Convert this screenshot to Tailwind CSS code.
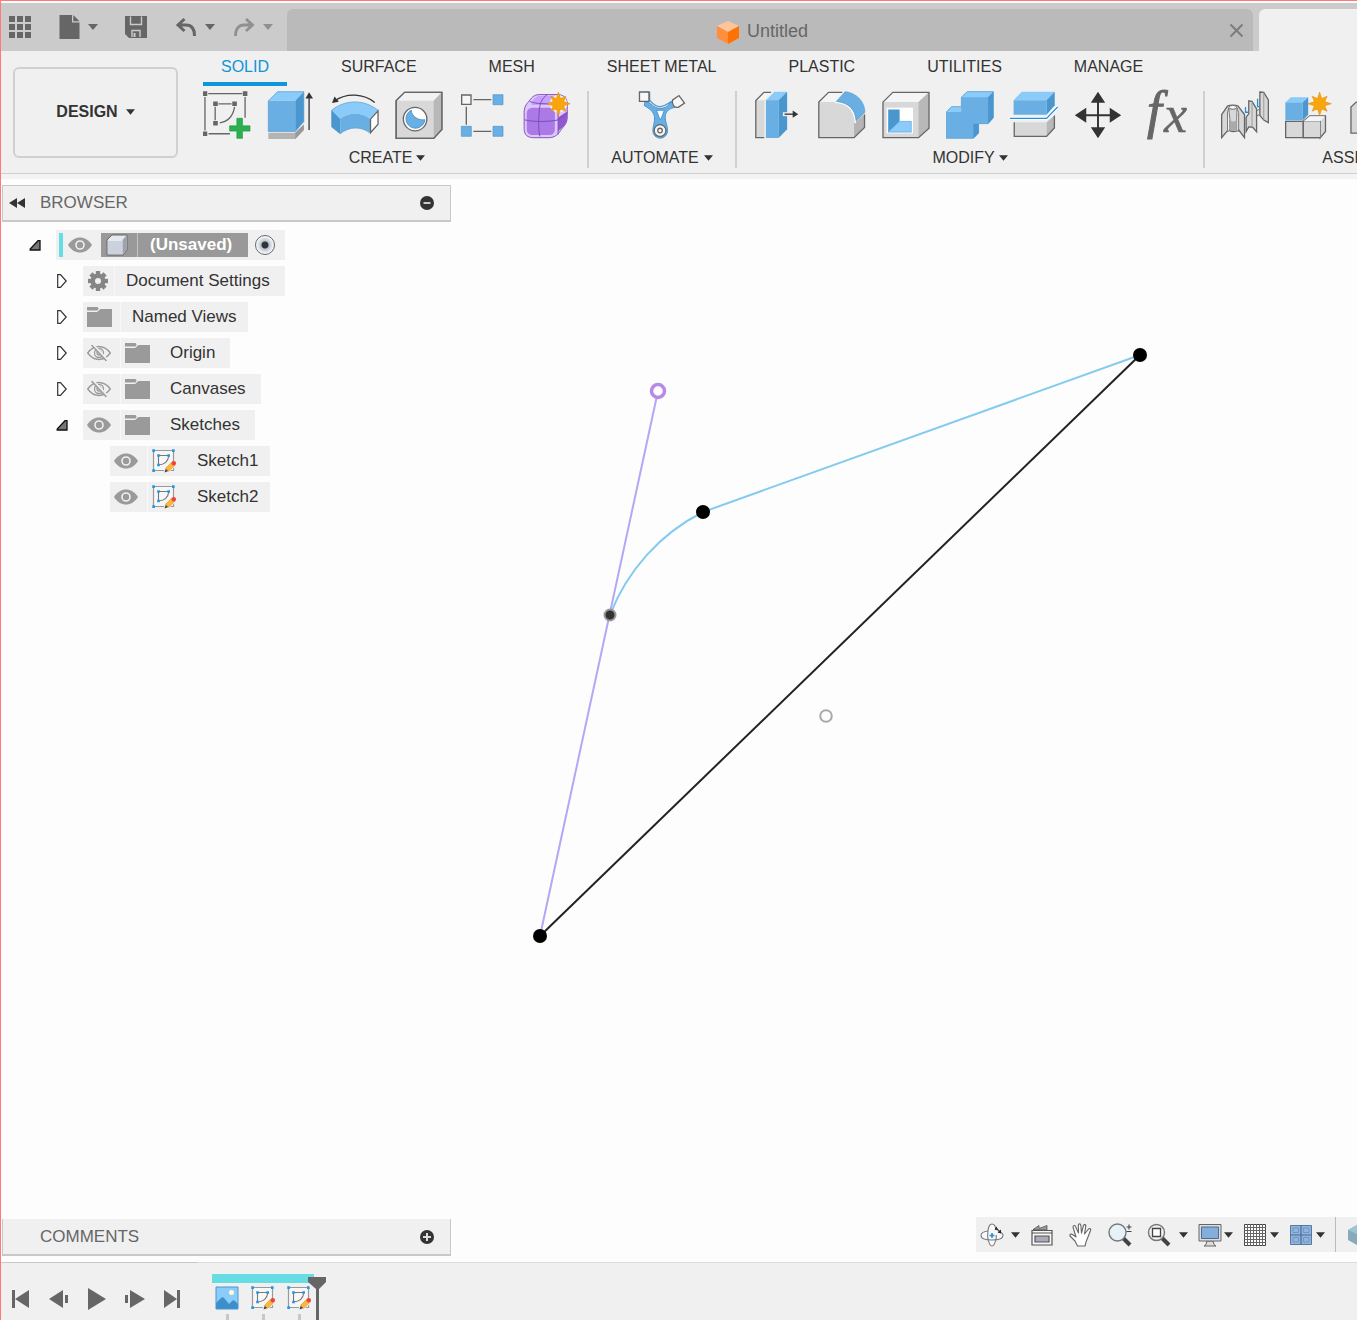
<!DOCTYPE html>
<html lang="en">
<head>
  <meta charset="UTF-8">
  <meta name="viewport" content="width=device-width, initial-scale=1.0">
  <title>Untitled</title>
  <script src="https://cdn.jsdelivr.net/npm/@tailwindcss/browser@4"></script>
</head>
<body class="bg-[#fdfdfd] font-['Liberation_Sans',Arial,sans-serif] text-[#333]">

  <!-- Shared icons -->
  <svg class="hidden" aria-hidden="true">
    <symbol id="caret" viewBox="0 0 10 6"><path d="M0 0h10L5 6z" fill="currentColor"/></symbol>
    <symbol id="eye" viewBox="0 0 24 16">
      <path d="M0 8C3 3 7.500 .5 12 .5S21 3 24 8c-3 5-7.500 7.500-12 7.500S3 13 0 8z" fill="#9a9a9a"/>
      <circle cx="12" cy="8" r="4" fill="#9a9a9a" stroke="#f0f0f0" stroke-width="1.600"/>
    </symbol>
    <symbol id="eye-off" viewBox="0 0 24 16">
      <g fill="none" stroke="#9a9a9a" stroke-width="1.300">
        <path d="M.7 8C4 3.500 8 1.500 12 1.500S20 3.500 23.300 8C20 12.500 16 14.500 12 14.500S4 12.500 .7 8z"/>
        <circle cx="12" cy="8" r="4.500"/><circle cx="12" cy="8" r="2"/>
      </g>
      <path d="M6 -.5L20.500 15" stroke="#f0f0f0" stroke-width="2"/>
      <path d="M4.500 0L19.500 16" stroke="#9a9a9a" stroke-width="1.500"/>
    </symbol>
    <symbol id="folder" viewBox="0 0 25 20">
      <path d="M0 5h10l3.500-3H25v18H0z" fill="#9a9a9a"/>
      <path d="M0 0h10.500l1.200 1.500L10.500 3.500H0z" fill="#9a9a9a"/>
    </symbol>
    <symbol id="closed" viewBox="0 0 10 14"><path d="M.7 .7h2.800L9.200 7l-5.700 6.300H.7z" fill="#fff" stroke="#333" stroke-width="1.200"/></symbol>
    <symbol id="open" viewBox="0 0 12 12"><path d="M1.200 11v-1L9 1.700h2V11z" fill="#777" stroke="#111" stroke-width="1.300"/></symbol>
    <symbol id="sketch" viewBox="0 0 24 24">
      <path d="M1.500 1.500h20v20h-20z" fill="#f7f7f7" stroke="#999" stroke-width="1.200"/>
      <path d="M6.500 6.500h10.300c-.5 5.500-4.500 9-10.300 9.500z" fill="none" stroke="#777" stroke-width="1.100"/>
      <path d="M.3 .3h2.600v2.600H.3zM20 .3h2.600v2.600H20zM.3 20.300h2.600v2.600H.3zM5.200 5.200h2.600v2.600H5.200zM15.400 5.200H18v2.600h-2.600zM5.200 14.700h2.600v2.600H5.200z" fill="#2196e3"/>
      <path d="M11 24.500l1.800-5.300L20 12l5 4-8 7z" fill="#f0f0f0"/>
      <path d="M12.500 23.500l1.300-4 2.700 2.500z" fill="#444"/>
      <path d="M13.600 19.300l6.200-6.200 3.300 3-6.400 6.200z" fill="#fbb63c" stroke="#e59a1c" stroke-width=".6"/>
      <circle cx="21.800" cy="14.200" r="2.200" fill="#f04040"/>
    </symbol>
    <symbol id="star" viewBox="-38 -38 76 76">
      <path d="M0-36L6.500-16 23-23 16-6.500 36 0 16 6.500 23 23 6.500 16 0 36-6.500 16-23 23-16 6.500-36 0-16-6.500-23-23-6.500-16z" fill="#faa50c" stroke="#dd8a00" stroke-width="1.500"/>
    </symbol>
  </svg>

  <div class="flex h-screen flex-col overflow-hidden border-t border-l border-[#ff7a7a]">

    <!-- Title bar -->
    <header class="mt-[2px] flex h-12 shrink-0 items-center bg-[#cbcbcb] pl-[7px] text-[#666]">
      <div class="flex items-center gap-[26px]">
        <button aria-label="Data panel">
          <svg class="size-6" viewBox="0 0 24 24" fill="currentColor"><path d="M1 1h6v6H1zM9 1h6v6H9zM17 1h6v6h-6zM1 9h6v6H1zM9 9h6v6H9zM17 9h6v6h-6zM1 17h6v6H1zM9 17h6v6H9zM17 17h6v6h-6z"/></svg>
        </button>
        <button class="flex items-center gap-[6px]" aria-label="File">
          <svg class="size-6" viewBox="0 0 24 24" fill="currentColor"><path d="M1.500 0H14v7.500h7.500V24h-20z"/><path d="M15.300 0l6.200 6.300h-6.200z"/></svg>
          <svg class="h-[6px] w-[10px]"><use href="#caret"/></svg>
        </button>
        <button aria-label="Save">
          <svg class="size-6" viewBox="0 0 24 24"><path d="M1 1h22v22H5l-4-4z" fill="currentColor"/><path d="M6.500 1.500v8h11v-8M8 22v-6.500h8V22" fill="none" stroke="#cbcbcb" stroke-width="1.400"/><path d="M10.500 18v4" stroke="#cbcbcb" stroke-width="2"/></svg>
        </button>
        <div class="flex items-center gap-[17px]">
          <button class="flex items-center gap-[7px]" aria-label="Undo">
            <svg class="size-6" viewBox="0 0 24 24" fill="none" stroke="currentColor" stroke-width="3"><path d="M10.500 4L4 10l6.500 6M4 10h8c5.500 0 8.500 4 8.500 11"/></svg>
            <svg class="h-[6px] w-[10px]"><use href="#caret"/></svg>
          </button>
          <button class="flex items-center gap-[7px] text-[#909090]" aria-label="Redo">
            <svg class="size-6" viewBox="0 0 24 24" fill="none" stroke="currentColor" stroke-width="2.800"><path d="M14 4l6.500 6-6.500 6M20.500 10H12c-5.500 0-8.500 4-8.500 11"/></svg>
            <svg class="h-[6px] w-[10px]"><use href="#caret"/></svg>
          </button>
        </div>
      </div>
      <div class="ml-[14px] flex h-[42px] flex-1 items-center self-end rounded-t-md bg-[#bababa] pr-[9px] pl-2">
        <div class="flex flex-1 items-center justify-center gap-[7px] pt-[3px] text-[18px]">
          <svg class="size-6" viewBox="0 0 24 24"><path d="M12 1l11 5-11 6L1 6z" fill="#ffc59a"/><path d="M1 6l11 6v12L1 18z" fill="#ff8f3c"/><path d="M23 6l-11 6v12l11-6z" fill="#ff7100"/></svg>
          <span>Untitled</span>
        </div>
        <button aria-label="Close">
          <svg class="size-[15px]" viewBox="0 0 15 15" stroke="#7c7c7c" stroke-width="2"><path d="M1.500 1.500l12 12M13.500 1.500l-12 12"/></svg>
        </button>
      </div>
      <div class="ml-[6px] h-[42px] w-[98px] self-end rounded-tl-md bg-[#f0f0f0]"></div>
    </header>

    <!-- Ribbon -->
    <section class="flex shrink-0 border-b border-[#d0d0d0] bg-[#f0f0f0] pb-[5px]">
      <button class="mt-4 ml-3 flex h-[91px] w-[165px] shrink-0 items-center justify-center gap-2 rounded-md border-2 border-[#d0d0d0] pb-[2px] text-[16px] font-bold">
        DESIGN
        <svg class="h-[6px] w-[9px]"><use href="#caret"/></svg>
      </button>
      <div class="ml-[25px] flex flex-col gap-[5px]">
        <nav class="flex gap-9 text-[16px]">
          <a href="#" class="flex h-[35px] items-center border-b-4 border-[#0d96d9] px-[18px] text-[#0d96d9]">SOLID</a>
          <a href="#" class="flex h-[35px] items-center border-b-4 border-transparent px-[18px]">SURFACE</a>
          <a href="#" class="flex h-[35px] items-center border-b-4 border-transparent px-[18px]">MESH</a>
          <a href="#" class="flex h-[35px] items-center border-b-4 border-transparent px-[18px] whitespace-nowrap">SHEET METAL</a>
          <a href="#" class="flex h-[35px] items-center border-b-4 border-transparent px-[18px]">PLASTIC</a>
          <a href="#" class="flex h-[35px] items-center border-b-4 border-transparent px-[18px]">UTILITIES</a>
          <a href="#" class="flex h-[35px] items-center border-b-4 border-transparent px-[18px]">MANAGE</a>
        </nav>

        <div class="flex">
          <!-- Create -->
          <div class="flex flex-col items-center gap-[9px] border-r-2 border-[#d0d0d0] pr-4">
            <div class="flex gap-4">
              <button aria-label="Create Sketch">
                <svg class="size-12" viewBox="35 123 146 146" fill="none" stroke="#666" stroke-width="4">
                  <path d="M51 131h103M41 141v102M163 141v63M52 253h65"/>
                  <path d="M82 162h40M72 171v41M131 171c-4 26-18 44-45 49"/>
                  <path d="M34 124h14v14H34zM156 124h14v14h-14zM34 246h14v14H34zM66 155h14v14H66zM124 155h14v14h-14zM66 214h14v14H66z" fill="#666" stroke="none"/>
                  <path d="M138 206h17v23h23v16h-23v22h-17v-22h-22v-16h22z" fill="#2bb04f" stroke="#1d9a44" stroke-width="2"/>
                </svg>
              </button>
              <button aria-label="Extrude">
                <svg class="size-12" viewBox="228 123 146 146">
                  <path d="M232 250h82l26-25v17l-26 27h-82z" fill="#b4b4b4"/><path d="M314 250l26-25v17l-26 27z" fill="#999"/>
                  <path d="M232 153l28-28h80l-26 28z" fill="#8acbfa"/><path d="M232 153h82v93h-82z" fill="#6aafe3"/><path d="M314 153l26-28v91l-26 30z" fill="#4a96cf"/>
                  <path d="M232 153l28-28h80v91l-26 30h-82z" fill="none" stroke="#4a96cf" stroke-width="2"/>
                  <path d="M356 242V140" stroke="#333" stroke-width="4"/><path d="M345 146l11-19 12 19z" fill="#333"/>
                </svg>
              </button>
              <button aria-label="Revolve">
                <svg class="size-12" viewBox="420 123 147 147">
                  <path d="M422 182c42-34 100-34 142 0l-24 26c-28-20-64-20-92 0z" fill="#8acbfa"/>
                  <path d="M422 182l26 26v46l-26-21z" fill="#4a96cf"/>
                  <path d="M448 208c28-20 64-20 92 0v43c-28-20-64-20-92 3z" fill="#6aafe3"/>
                  <path d="M422 182c42-34 100-34 142 0M422 182v51l26 21c28-23 64-23 90-3" fill="none" stroke="#4a96cf" stroke-width="2"/>
                  <path d="M541 209l23-25v41l-23 26z" fill="#fff" stroke="#666" stroke-width="4"/>
                  <path d="M554 158c-34-28-86-30-121-6" fill="none" stroke="#333" stroke-width="4"/><path d="M423 160l8-20 13 16z" fill="#333"/>
                </svg>
              </button>
              <button aria-label="Hole">
                <svg class="size-12" viewBox="615 123 144 147" stroke="#666" stroke-width="4">
                  <path d="M617 153l26-26h114v114l-25 27H617z" fill="#d8d8d8"/>
                  <path d="M617 153l26-26h114l-25 26z" fill="#f2f2f2" stroke="none"/><path d="M732 153l25-26v114l-25 27z" fill="#b8b8b8" stroke="none"/>
                  <path d="M617 153l26-26h114v114l-25 27H617z" fill="none"/>
                  <circle cx="675" cy="209" r="36" fill="#fff"/>
                  <path d="M663 182c2 20 22 32 42 29a29 29 0 1 1-42-29z" fill="#6aafe3" stroke="#4a96cf" stroke-width="3"/>
                </svg>
              </button>
              <button aria-label="Rectangular Pattern">
                <svg class="size-12" viewBox="52 123 144 144">
                  <path d="M95 149h54M74 170v54M95 244h54" stroke="#666" stroke-width="4"/>
                  <path d="M60 135h28v28H60z" fill="#f7f7f7" stroke="#666" stroke-width="4"/>
                  <path d="M154 134h30v30h-30zM59 229h30v30H59zM154 229h30v30h-30z" fill="#6aafe3" stroke="#4a96cf" stroke-width="2"/>
                </svg>
              </button>
              <button aria-label="Create Form">
                <svg class="size-12" viewBox="250 123 146 147" fill="none">
                  <path d="M253 190c0-18 6-26 14-35 8-10 15-21 32-21h55c20 0 31 10 31 30v37c0 14-3 22-12 32-12 14-18 33-44 33h-46c-20 0-30-8-30-28z" fill="#dcc6fa" stroke="#8452c0" stroke-width="3"/>
                  <path d="M276 158c8-13 14-20 26-20h50l-24 28h-52z" fill="#c79ffc"/>
                  <rect x="261" y="174" width="86" height="84" rx="17" fill="#ab7ae6"/>
                  <path d="M357 204l28-18v16c0 14-4 20-12 30l-16 14z" fill="#9059d0"/>
                  <path d="M254 211c20 7 80 7 104 0l27-22M301 262c-5-24-4-66 0-92 3-18 14-32 24-36M357 256v-70M270 155c20 8 50 8 84 6" stroke="#7b4bb8" stroke-width="3"/>
                  <circle cx="358" cy="162" r="27" fill="#f0f0f0"/>
                  <use href="#star" x="320" y="124" width="76" height="76"/>
                </svg>
              </button>
            </div>
            <button class="flex items-center gap-1 text-[16px] leading-5">CREATE <svg class="h-[6px] w-[9px]"><use href="#caret"/></svg></button>
          </div>

          <!-- Automate -->
          <div class="flex w-[148px] shrink-0 flex-col items-center gap-[9px] border-r-2 border-[#d0d0d0]">
            <button aria-label="Automated Modeling">
              <svg class="size-12" viewBox="593 123 144 147" stroke="#666" stroke-width="4">
                <path d="M612 158c22-4 24 18 45 18s28-6 35-22l18 18c-25 4-35 14-35 32 0 15 7 25 7 41a22 22 0 1 1-45 0c0-16 7-28 5-43-3-16-14-25-31-34z" fill="#6aafe3" stroke="#4a96cf" stroke-width="3"/>
                <path d="M612 127h15v24c12 14 20 20 32 20 20 0 23-12 35-15" fill="none" stroke="#4a96cf"/>
                <path d="M648 182h24l-10 27h-4z" fill="#fff" stroke="#4a96cf" stroke-width="3"/>
                <path d="M596 126h29v29h-29z" fill="#f7f7f7"/><path d="M697 151l20-14 17 23-19 13c-13 2-20-9-18-22z" fill="#f7f7f7"/>
                <circle cx="659" cy="244" r="18" fill="#f7f7f7"/><circle cx="659" cy="244" r="7" fill="#f7f7f7"/>
              </svg>
            </button>
            <button class="flex items-center gap-[5px] text-[16px] leading-5">AUTOMATE <svg class="h-[6px] w-[9px]"><use href="#caret"/></svg></button>
          </div>

          <!-- Modify -->
          <div class="flex flex-col items-center gap-[9px] border-r-2 border-[#d0d0d0] px-[17px]">
            <div class="flex gap-4">
              <button aria-label="Press Pull">
                <svg class="size-12" viewBox="42 123 146 147">
                  <path d="M47 151l23-24h34l-30 30v109H47z" fill="#d8d8d8"/><path d="M47 151l23-24h34l-30 24z" fill="#f5f5f5"/>
                  <path d="M94 127H72l-25 25v114h26" fill="none" stroke="#666" stroke-width="4"/>
                  <path d="M74 150l26-30v150H74z" fill="#f0f0f0"/>
                  <path d="M78 151l26-26h39l-26 26z" fill="#8acbfa"/><path d="M78 151h39v116H78z" fill="#6aafe3"/><path d="M117 151l26-26v115l-26 27z" fill="#4a96cf"/>
                  <path d="M130 194h48" stroke="#f0f0f0" stroke-width="12"/><path d="M135 194h32" stroke="#333" stroke-width="4"/><path d="M160 183l17 11-17 11z" fill="#333"/>
                </svg>
              </button>
              <button aria-label="Fillet">
                <svg class="size-12" viewBox="234 123 146 147">
                  <path d="M236 157l30-30h46l-24 30c32 0 58 26 58 58l30-20v40l-32 31H236z" fill="#d8d8d8"/>
                  <path d="M236 157l30-30h46l-26 30z" fill="#f5f5f5"/><path d="M344 222l32-28v41l-32 31z" fill="#b4b4b4"/>
                  <path d="M308 127h-42l-30 30v109h108l32-31v-40" fill="none" stroke="#666" stroke-width="4"/>
                  <path d="M286 158c42 2 60 25 62 64" fill="none" stroke="#fff" stroke-width="4"/>
                  <path d="M290 155l27-30c34 4 60 30 60 64l-27 25c-2-34-22-55-60-59z" fill="#6aafe3" stroke="#4a96cf" stroke-width="2"/>
                </svg>
              </button>
              <button aria-label="Shell">
                <svg class="size-12" viewBox="427 123 147 147">
                  <path d="M430 157l30-30h111v110l-32 29H430z" fill="#d8d8d8"/><path d="M430 157l30-30h111l-32 30z" fill="#f5f5f5"/><path d="M539 157l32-30v110l-32 29z" fill="#b8b8b8"/>
                  <path d="M430 157l30-30h111v110l-32 29H430z" fill="none" stroke="#666" stroke-width="4"/>
                  <path d="M441 174h81v79h-81z" fill="#fff"/><path d="M446 180h35v36l-35 33z" fill="#4a96cf"/><path d="M446 249l35-33h36v33z" fill="#8acbfa" stroke="#4a96cf" stroke-width="1.500"/>
                </svg>
              </button>
              <button aria-label="Combine">
                <svg class="size-12" viewBox="620 123 147 147">
                  <path d="M621 187l16-16h30v-29l18-17h80v80l-16 18h-29v29l-16 16h-83z" fill="#6aafe3"/>
                  <path d="M667 142l18-17h80l-16 17zM621 187l16-16h30v16z" fill="#8acbfa"/><path d="M749 142l16-17v80l-16 18zM704 223h16v29l-16 16z" fill="#4a96cf"/>
                  <path d="M621 187l16-16h30v-29l18-17h80v80l-16 18h-29v29l-16 16h-83z" fill="none" stroke="#4a96cf" stroke-width="2"/>
                </svg>
              </button>
              <button aria-label="Split Body">
                <svg class="size-12" viewBox="813 123 147 147">
                  <path d="M824 151l25-26h101l-25 26z" fill="#8acbfa"/><path d="M824 151h101v45H824z" fill="#6aafe3"/><path d="M925 151l25-26v42l-25 29z" fill="#4a96cf"/>
                  <path d="M826 219h99v43h-99z" fill="#d8d8d8"/><path d="M925 219l24-21v38l-24 26z" fill="#b8b8b8"/><path d="M826 219v43h99l24-26v-38" fill="none" stroke="#666" stroke-width="4"/>
                  <path d="M813 207h112l34-35" fill="none" stroke="#fff" stroke-width="10"/>
                  <path d="M813 207h112l34-35" fill="none" stroke="#1f8fe0" stroke-width="4"/>
                </svg>
              </button>
              <button aria-label="Move/Copy">
                <svg class="size-12" viewBox="108 273 144 147">
                  <path d="M180 300v92M135 347h90" stroke="#333" stroke-width="6"/>
                  <path d="M180 275l22 34h-44zM180 418l22-34h-44zM109 347l35-23v46zM251 347l-35-23v46z" fill="#333"/>
                </svg>
              </button>
              <button aria-label="Change Parameters">
                <svg class="size-12 overflow-visible" viewBox="0 0 48 48">
                  <text x="9" y="37" font-family="Liberation Serif" font-style="italic" font-size="53" fill="#666" stroke="#666" stroke-width="1">f</text>
                  <text x="26" y="41" font-family="Liberation Serif" font-style="italic" font-size="52" fill="#666" stroke="#666" stroke-width=".5">x</text>
                </svg>
              </button>
            </div>
            <button class="flex items-center gap-1 text-[16px] leading-5">MODIFY <svg class="h-[6px] w-[9px]"><use href="#caret"/></svg></button>
          </div>

          <!-- Assemble -->
          <div class="flex w-[318px] shrink-0 flex-col items-center gap-[9px] pl-4">
            <div class="flex gap-4 self-start">
              <button aria-label="Joint">
                <svg class="size-12" viewBox="543 273 147 147" fill="#d8d8d8" stroke="#666" stroke-width="4">
                  <path d="M662 276l12 1 14 23v70l-14-8-12-14z"/><path d="M674 277v84" stroke="#999" stroke-width="3"/>
                  <path d="M628 303l10 2 14 23v70l-12-14-12-1-8 14v-44l8-10z"/><path d="M638 305v80" stroke="#999" stroke-width="3"/>
                  <path d="M652 350l10-6M655 334l7-8" stroke-width="3"/>
                  <path d="M545 345l18-26c6-4 26-4 32 0l20 26v71l-18-24c-7 7-24 7-32 0l-20 24z"/>
                  <path d="M567 325c0 12 2 20 3 32v36l-7 5v-60zM592 325c0 12-1 22-1 32v36l6 4v-58z" fill="#f5f5f5" stroke="#777" stroke-width="3"/>
                  <path d="M571 362c6 6 14 6 20 0v30c-6 5-14 5-20 0z" fill="#aaa" stroke="none"/><ellipse cx="579" cy="323" rx="12" ry="6" fill="#f5f5f5" stroke-width="3"/>
                  <path d="M618 322v16h8M655 297v24h6" fill="none" stroke="#1f8fe0"/>
                </svg>
              </button>
              <button aria-label="New Component">
                <svg class="size-12 overflow-visible" viewBox="738 273 147 147">
                  <path d="M740 366h54v50h-54zM794 366h52v50h-52z" fill="#d8d8d8" stroke="#666" stroke-width="4"/>
                  <path d="M794 366l20-17h48v48l-16 19v-50z" fill="#d8d8d8" stroke="#666" stroke-width="4"/><path d="M796 365l18-15h46l-14 15z" fill="#f5f5f5"/>
                  <path d="M794 366h52v50h-52z" fill="#d8d8d8"/><path d="M794 366v50h52" fill="none" stroke="#666" stroke-width="4"/>
                  <path d="M739 308l17-16h53l-17 16z" fill="#8acbfa"/><path d="M739 308h53v55h-53z" fill="#6aafe3"/><path d="M792 308l17-16v54l-17 17z" fill="#4a96cf"/>
                  <circle cx="844" cy="312" r="30" fill="#f0f0f0"/><use href="#star" x="806" y="274" width="76" height="76"/>
                </svg>
              </button>
              <button aria-label="As-built Joint">
                <svg class="size-12" viewBox="936 273 147 147"><path d="M942 402v-80l16-15h60v95z" fill="#d8d8d8" stroke="#666" stroke-width="4"/></svg>
              </button>
            </div>
            <button class="flex items-center gap-1 text-[16px] leading-5">ASSEMBLE <svg class="h-[6px] w-[9px]"><use href="#caret"/></svg></button>
          </div>
        </div>
      </div>
    </section>
    <div class="h-[5px] shrink-0 bg-[#f3f3f3]"></div>

    <!-- Canvas -->
    <main class="relative flex flex-1 flex-col justify-between">
      <svg class="absolute inset-0 size-full" viewBox="1 179 1356 1083" preserveAspectRatio="xMinYMin slice" fill="none" stroke-width="2">
        <path d="M658 391L540 936" stroke="#b3a8f5"/>
        <path d="M1140 355L703 512A193 193 0 0 0 610 615" stroke="#84cbef"/>
        <path d="M1140 355L540 936" stroke="#222"/>
        <circle cx="658" cy="391" r="6.500" fill="#fff" stroke="#b78ae8" stroke-width="3.500"/>
        <circle cx="826" cy="716" r="5.800" fill="#fdfdfd" stroke="#aaa"/>
        <g fill="#000"><circle cx="1140" cy="355" r="7"/><circle cx="703" cy="512" r="7"/><circle cx="540" cy="936" r="7"/></g>
        <circle cx="610" cy="615" r="5.500" fill="#333" stroke="#999"/>
      </svg>

      <!-- Browser tree -->
      <aside class="relative ml-px w-[449px] pt-[6px] text-[17px]">
        <div class="flex h-[37px] items-center border border-b-2 border-[#c8c8c8] bg-[#f0f0f0] px-[6px] text-[#666]">
          <button aria-label="Collapse browser"><svg class="h-[10px] w-4" viewBox="0 0 16 10"><path d="M8 0v10L0 5zM16 0v10L8 5z" fill="#333"/></svg></button>
          <h2 class="ml-[15px] flex-1">BROWSER</h2>
          <button class="mr-[10px]" aria-label="Hide all"><svg class="size-[14px]" viewBox="0 0 14 14"><circle cx="7" cy="7" r="7" fill="#333"/><path d="M3.500 7h7" stroke="#ccc" stroke-width="2"/></svg></button>
        </div>
        <ul class="mt-2 flex flex-col gap-[6px]">
          <li class="flex items-center pl-[27px]">
            <button aria-label="Collapse"><svg class="size-3"><use href="#open"/></svg></button>
            <div class="ml-[15px] flex h-[30px] items-center bg-[#f0f0f0] pr-[10px] pl-[3px]">
              <span class="h-6 w-1 bg-[#66dde2]"></span>
              <button class="ml-[5px]" aria-label="Toggle visibility"><svg class="h-4 w-6"><use href="#eye"/></svg></button>
              <div class="ml-[9px] flex h-6 items-center bg-[#999] text-white">
                <svg class="ml-[5px] size-[22px]" viewBox="0 0 22 22"><path d="M1 6l5-5h15v15l-4 5H1z" fill="#e6e9ef" stroke="#666"/><path d="M16.500 6l4-4.500V16l-4 4.500z" fill="#9da3ae"/><path d="M2 7h14v13H2z" fill="#ccd2dd"/></svg>
                <span class="ml-[9px] h-6 w-px bg-[#c4c4c4]"></span>
                <span class="pr-4 pl-3 font-bold">(Unsaved)</span>
              </div>
              <input type="radio" checked aria-label="Activate component" class="ml-[7px] size-5 appearance-none rounded-full border border-[#666] bg-[radial-gradient(circle,#333_0_3px,#b4c0d0_4px,#fff_9px)]">
            </div>
          </li>
          <li class="flex items-center pl-[55px]">
            <button aria-label="Expand"><svg class="h-[14px] w-[10px]"><use href="#closed"/></svg></button>
            <div class="ml-4 flex h-[30px] items-center bg-[#f0f0f0] pr-[15px] pl-1">
              <svg class="size-[22px]" viewBox="-11 -11 22 22"><g fill="#858585"><path d="M-2.200-10h4.400v20h-4.400z"/><path d="M-2.200-10h4.400v20h-4.400z" transform="rotate(45)"/><path d="M-2.200-10h4.400v20h-4.400z" transform="rotate(90)"/><path d="M-2.200-10h4.400v20h-4.400z" transform="rotate(135)"/><circle r="7.500"/></g><circle r="3" fill="#f0f0f0"/></svg>
              <span class="ml-[5px] h-[30px] w-px bg-[#f8f8f8]"></span>
              <span class="ml-[11px]">Document Settings</span>
            </div>
          </li>
          <li class="flex items-center pl-[55px]">
            <button aria-label="Expand"><svg class="h-[14px] w-[10px]"><use href="#closed"/></svg></button>
            <div class="ml-4 flex h-[30px] items-center bg-[#f0f0f0] pr-[11px] pl-1">
              <svg class="h-5 w-[25px]"><use href="#folder"/></svg>
              <span class="ml-2 h-[30px] w-px bg-[#f8f8f8]"></span>
              <span class="ml-[11px]">Named Views</span>
            </div>
          </li>
          <li class="flex items-center pl-[55px]">
            <button aria-label="Expand"><svg class="h-[14px] w-[10px]"><use href="#closed"/></svg></button>
            <div class="ml-4 flex h-[30px] items-center bg-[#f0f0f0] pr-[15px] pl-1">
              <button aria-label="Toggle visibility"><svg class="h-4 w-6"><use href="#eye-off"/></svg></button>
              <span class="ml-[9px] h-[30px] w-px bg-[#f8f8f8]"></span>
              <svg class="ml-1 h-5 w-[25px]"><use href="#folder"/></svg>
              <span class="ml-5">Origin</span>
            </div>
          </li>
          <li class="flex items-center pl-[55px]">
            <button aria-label="Expand"><svg class="h-[14px] w-[10px]"><use href="#closed"/></svg></button>
            <div class="ml-4 flex h-[30px] items-center bg-[#f0f0f0] pr-[15px] pl-1">
              <button aria-label="Toggle visibility"><svg class="h-4 w-6"><use href="#eye-off"/></svg></button>
              <span class="ml-[9px] h-[30px] w-px bg-[#f8f8f8]"></span>
              <svg class="ml-1 h-5 w-[25px]"><use href="#folder"/></svg>
              <span class="ml-5">Canvases</span>
            </div>
          </li>
          <li class="flex items-center pl-[54px]">
            <button aria-label="Collapse"><svg class="size-3"><use href="#open"/></svg></button>
            <div class="ml-[15px] flex h-[30px] items-center bg-[#f0f0f0] pr-[15px] pl-1">
              <button aria-label="Toggle visibility"><svg class="h-4 w-6"><use href="#eye"/></svg></button>
              <span class="ml-[9px] h-[30px] w-px bg-[#f8f8f8]"></span>
              <svg class="ml-1 h-5 w-[25px]"><use href="#folder"/></svg>
              <span class="ml-5">Sketches</span>
            </div>
          </li>
          <li class="flex items-center pl-[108px]">
            <div class="flex h-[30px] items-center bg-[#f0f0f0] pr-3 pl-1">
              <button aria-label="Toggle visibility"><svg class="h-4 w-6"><use href="#eye"/></svg></button>
              <span class="ml-[9px] h-[30px] w-px bg-[#f8f8f8]"></span>
              <svg class="ml-1 size-6"><use href="#sketch"/></svg>
              <span class="ml-[21px]">Sketch1</span>
            </div>
          </li>
          <li class="flex items-center pl-[108px]">
            <div class="flex h-[30px] items-center bg-[#f0f0f0] pr-3 pl-1">
              <button aria-label="Toggle visibility"><svg class="h-4 w-6"><use href="#eye"/></svg></button>
              <span class="ml-[9px] h-[30px] w-px bg-[#f8f8f8]"></span>
              <svg class="ml-1 size-6"><use href="#sketch"/></svg>
              <span class="ml-[21px]">Sketch2</span>
            </div>
          </li>
        </ul>
      </aside>

      <div class="relative flex items-start justify-between pb-[6px] pl-px">
        <div class="mt-[2px] flex h-[37px] w-[449px] items-center border-x border-b-2 border-[#c8c8c8] bg-[#f0f0f0] pr-4 pl-[37px] text-[17px] text-[#666]">
          <h2 class="flex-1">COMMENTS</h2>
          <button aria-label="Add comment"><svg class="size-[14px]" viewBox="0 0 14 14"><circle cx="7" cy="7" r="7" fill="#333"/><path d="M3 7h8M7 3v8" stroke="#ddd" stroke-width="2"/></svg></button>
        </div>

        <!-- View controls -->
        <div class="flex h-[35px] items-center gap-[10px] bg-[#f0f0f0] pl-1">
          <button class="flex items-center gap-[7px]" aria-label="Orbit">
            <svg class="size-6" viewBox="0 0 24 24" fill="none" stroke="#777" stroke-width="1.100"><path d="M8 8C8.500 3 10 1 12 1s3.500 2 4 6M8.500 17.500c.7 3.300 2 5.500 3.500 5.500s2.800-2.200 3.500-5.500" fill="#fafafa"/><path d="M8 8C3.500 8.500 1 10 1 12.500S5 17 12 17s11-2 11-4.500c0-1.500-1-2.700-3-3.500" fill="#fafafa"/><path d="M8 8c-.6 3-.6 6 .3 9.500M15.700 17.500c.5-2 .6-3.500.6-5.500"/><path d="M12 10v5M9.500 12.500h5" stroke="#1f8fe0" stroke-width="1.600"/><path d="M14.500 6.500l2-3 1.500 3.500zM17.500 9.500l3.500-3v4z" fill="#222" stroke="none"/><path d="M16 5l4 4" stroke="#333"/></svg>
            <svg class="h-[6px] w-[9px]"><use href="#caret"/></svg>
          </button>
          <div class="flex items-center gap-[15px]">
            <button aria-label="Look At"><svg class="size-6" viewBox="0 0 24 24" fill="#f7f7f7" stroke="#555" stroke-width="1.200"><path d="M3 6.500l6-4v3l8-3v4.500z" fill="#999" stroke-width=".8"/><path d="M2 7.500h20V22H2z"/><path d="M2 10h20" stroke-width="1"/><path d="M5 13h14v6H5z" fill="#aab"/></svg></button>
            <button aria-label="Pan"><svg class="size-6" viewBox="0 0 24 24" fill="#fff" stroke="#666" stroke-width="1.100" stroke-linejoin="round"><path d="M8.500 23L6 18 1 13c-.5-1.500 1-2.500 2.500-1.500L7 14 4 4c0-1.800 2-2 2.500-.5L9.500 10 9.300 2c.3-1.500 2.300-1.500 2.500 0l.7 8 2-7.500c.7-1.500 2.500-1 2.300.7L15.500 11l4-5c1-1 2.700 0 2 1.500L19 14l-2 5-1 4z"/></svg></button>
            <button aria-label="Zoom"><svg class="size-6" viewBox="0 0 24 24" fill="none" stroke="#444"><path d="M15 15l7 7" stroke-width="4"/><circle cx="9.500" cy="9.500" r="8.500" fill="#e6f2f8" stroke="#777" stroke-width="1.400"/><path d="M18.500 4h5M21 1.500v5M18.500 8.500h5" stroke-width="1.100"/></svg></button>
            <button class="flex items-center gap-2" aria-label="Fit">
              <svg class="size-6" viewBox="0 0 24 24" fill="none" stroke="#444"><path d="M15 15l7 7" stroke-width="4"/><circle cx="9.500" cy="9.500" r="8" fill="#eef2f4" stroke="#777" stroke-width="1.400"/><path d="M5.500 5.500h8v8h-8z" fill="#fff" stroke-width="1.300"/></svg>
              <svg class="h-[6px] w-[9px]"><use href="#caret"/></svg>
            </button>
          </div>
          <button class="flex items-center gap-[2px]" aria-label="Display Settings">
            <svg class="size-6" viewBox="0 0 24 24" fill="#ddd" stroke="#666"><path d="M9 18h6l1 3.500 2 1.500H6l2-1.500z"/><path d="M1 1.500h22V18H1z"/><path d="M3.500 4h17v11.500h-17z" fill="#86aedb" stroke="#4a6b94"/></svg>
            <svg class="h-[6px] w-[9px]"><use href="#caret"/></svg>
          </button>
          <button class="flex items-center gap-[3px]" aria-label="Grid and Snaps">
            <svg class="size-6" viewBox="0 0 24 24" fill="#fff" stroke="#666"><path d="M1.500 1.500h21v21h-21z" stroke="#444"/><path d="M4.500 1v22M7.500 1v22M10.500 1v22M13.500 1v22M16.500 1v22M19.500 1v22M1 4.500h22M1 7.500h22M1 10.500h22M1 13.500h22M1 16.500h22M1 19.500h22"/></svg>
            <svg class="h-[6px] w-[9px]"><use href="#caret"/></svg>
          </button>
          <button class="flex items-center gap-[3px]" aria-label="Viewports">
            <svg class="size-6" viewBox="0 0 24 24" fill="#8fb4dd" stroke="#567aa5"><path d="M1.500 2.500h21v19h-21z"/><path d="M4 5h5.500v4.500H4zM14.500 5H20v4.500h-5.500zM4 14.500h5.500V19H4zM14.500 14.500H20V19h-5.500z" stroke="#7396c0"/><path d="M12 2.500v19M1.500 12h21" stroke="#4a6b94" stroke-width="1.200"/></svg>
            <svg class="h-[6px] w-[9px]"><use href="#caret"/></svg>
          </button>
          <span class="h-[35px] w-px bg-[#bbb]"></span>
          <svg class="ml-[2px] h-6 w-[9px]" viewBox="0 0 9 24"><path d="M0 7l9-5v20l-9-5z" fill="#86aabb"/><path d="M0 7l9-5v9z" fill="#9cc4d2"/></svg>
        </div>
      </div>
    </main>

    <!-- Timeline -->
    <footer class="flex h-[58px] shrink-0 bg-[#f0f0f0] text-[#666]">
      <div class="flex w-[197px] shrink-0 items-center gap-[18px] border-t border-[#c8c8c8] pt-[14px] pl-[10px]">
        <button aria-label="Go to start"><svg class="size-5" viewBox="0 0 20 20" fill="currentColor"><path d="M1 1h3v18H1zM18 1v18L4 10z"/></svg></button>
        <button aria-label="Step back"><svg class="size-5" viewBox="0 0 20 20" fill="currentColor"><path d="M14 1v18L0 10zM16 6h3v8h-3z"/></svg></button>
        <button aria-label="Play"><svg class="h-[22px] w-5" viewBox="0 0 20 22" fill="currentColor"><path d="M1 0v22l18-11z"/></svg></button>
        <button aria-label="Step forward"><svg class="size-5" viewBox="0 0 20 20" fill="currentColor"><path d="M5 1v18l15-9zM0 6h3v8H0z"/></svg></button>
        <button aria-label="Go to end"><svg class="size-5" viewBox="0 0 20 20" fill="currentColor"><path d="M1 1v18l13-9zM14 1h3v18h-3z"/></svg></button>
      </div>
      <div class="flex-1 border-t border-[#dcdcdc] pt-[11px] pl-[14px]">
        <div class="relative w-[102px]">
          <div class="h-[9px] bg-[#66dde2]"></div>
          <div class="mt-[3px] flex gap-3 pl-[3px]">
            <button class="flex shrink-0 flex-col items-center gap-1" aria-label="Canvas">
              <svg class="size-6" viewBox="0 0 24 24"><path d="M1 1h22v22H1z" fill="#8accfa"/><path d="M1 17l5-5c1-1 2-1 3 0l5 6 3-3c1-1 2-1 3 0l3 3v5H1z" fill="#3d8fcb"/><circle cx="16.500" cy="6.500" r="2.500" fill="#fffbd0"/><path d="M1 1h22v22H1z" fill="none" stroke="#4a96cf"/></svg>
              <span class="h-[6px] w-[3px] bg-[#c8c8c8]"></span>
            </button>
            <button class="flex shrink-0 flex-col items-center gap-1" aria-label="Sketch1">
              <svg class="size-6"><use href="#sketch"/></svg>
              <span class="h-[6px] w-[3px] bg-[#c8c8c8]"></span>
            </button>
            <button class="flex shrink-0 flex-col items-center gap-1" aria-label="Sketch2">
              <svg class="size-6"><use href="#sketch"/></svg>
              <span class="h-[6px] w-[3px] bg-[#c8c8c8]"></span>
            </button>
          </div>
          <svg class="absolute top-[3px] left-24 h-[43px] w-[18px]" viewBox="0 0 18 43" fill="currentColor"><path d="M0 0h18v5l-7 7v31H8V12L0 5z"/></svg>
        </div>
      </div>
    </footer>
  </div>
</body>
</html>
